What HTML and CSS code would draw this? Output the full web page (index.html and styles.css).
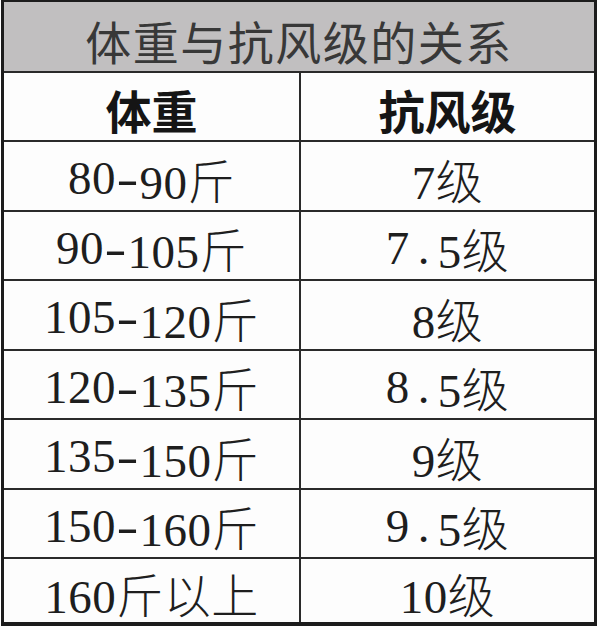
FILE: index.html
```html
<!DOCTYPE html>
<html lang="zh-CN">
<head>
<meta charset="utf-8">
<title>体重与抗风级的关系</title>
<link rel="stylesheet" href="styles.css">
</head>
<body>
<div class="table">
  <div class="cell title">体重与抗风级的关系</div>
  <div class="cell head">体重</div>
  <div class="cell head">抗风级</div>
  <div class="cell data">80<span class="dash">-</span>90斤</div>
  <div class="cell data">7级</div>
  <div class="cell data">90<span class="dash">-</span>105斤</div>
  <div class="cell data">7<span class="dot">.</span>5级</div>
  <div class="cell data">105<span class="dash">-</span>120斤</div>
  <div class="cell data">8级</div>
  <div class="cell data">120<span class="dash">-</span>135斤</div>
  <div class="cell data">8<span class="dot">.</span>5级</div>
  <div class="cell data">135<span class="dash">-</span>150斤</div>
  <div class="cell data">9级</div>
  <div class="cell data">150<span class="dash">-</span>160斤</div>
  <div class="cell data">9<span class="dot">.</span>5级</div>
  <div class="cell data">160斤以上</div>
  <div class="cell data">10级</div>
</div>
</body>
</html>
```
FILE: styles.css
```css
html, body {
  margin: 0;
  padding: 0;
  background: #ffffff;
}

.table {
  box-sizing: border-box;
  margin: 0 0 0 1px;
  width: 596px;
  height: 626px;
  border-style: solid;
  border-color: #1c1c1c;
  border-width: 2px 3px 4px 3px;
  background: #2a2a2a;
  display: grid;
  grid-template-columns: 295px 293px;
  grid-template-rows: 69px 67px 68px 67px 68px 67px 68px 67px 63px;
  gap: 2px;
}

.cell {
  background: #fdfdfd;
  display: flex;
  align-items: center;
  justify-content: center;
  color: #1e1e1e;
  white-space: nowrap;
}

.title {
  grid-column: 1 / 3;
  background: #c1bfc0;
  color: #383838;
  font-family: "Noto Sans CJK SC", sans-serif;
  font-weight: 400;
  font-size: 46px;
  letter-spacing: 1.5px;
  padding-top: 6px;
  box-sizing: border-box;
}

.head {
  font-family: "Noto Sans CJK SC", sans-serif;
  font-weight: 700;
  font-size: 46px;
  color: #151515;
  padding-top: 4px;
  box-sizing: border-box;
}

.data {
  font-family: "Liberation Serif", "Noto Sans CJK SC", serif;
  font-weight: 300;
  font-size: 47px;
  letter-spacing: 0.5px;
  padding-top: 4px;
  box-sizing: border-box;
}

.dash {
  display: inline-block;
  width: 0.5em;
  text-align: center;
  transform: scaleX(1.4);
}

.dot {
  display: inline-block;
  width: 0.6em;
  text-align: center;
}
```
